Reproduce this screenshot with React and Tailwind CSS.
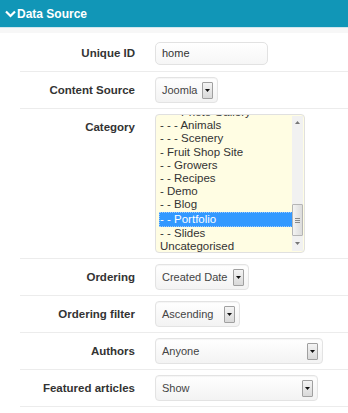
import React from "react";

const font = { fontFamily: '"Liberation Sans", Arial, sans-serif' };

function Arrow() {
  return (
    <span className="flex h-[17px] w-[11px] items-center justify-center rounded-[1px] border border-[#a0a0a0] bg-gradient-to-b from-[#f4f4f4] to-[#d9d9d9]">
      <svg width="5" height="3" viewBox="0 0 5 3">
        <path d="M0 0H5L2.5 3Z" fill="#111" />
      </svg>
    </span>
  );
}

function Select({ w, text }) {
  return (
    <div
      className={`flex h-[26px] items-center justify-between rounded-[4px] border border-[#e3e3e3] bg-gradient-to-b from-white to-[#f3f3f3] pl-[6px] pr-[4px] shadow-[inset_0_1px_1px_rgba(0,0,0,0.04)] ${w}`}
    >
      <span className="text-[11px] text-[#444]">{text}</span>
      <Arrow />
    </div>
  );
}

function Row({ label, children }) {
  return (
    <div className="flex items-start border-b border-[#ececec] py-[5px]">
      <div className="w-[115px] pr-0 text-right text-[11.5px] font-bold leading-[26px] text-[#333]">
        {label}
      </div>
      <div className="ml-[20px] flex min-h-[26px] items-center">{children}</div>
    </div>
  );
}

const items = [
  "- - - Animals",
  "- - - Scenery",
  "- Fruit Shop Site",
  "- - Growers",
  "- - Recipes",
  "- Demo",
  "- - Blog",
  "- - Portfolio",
  "- - Slides",
  "Uncategorised",
];

export default function App() {
  return (
    <div className="h-[413px] w-[348px] overflow-hidden bg-white" style={font}>
      <div className="flex h-[27px] items-center bg-[#1196b7] pl-[5px] text-[12px] font-bold text-white">
        <svg width="11" height="8" viewBox="0 0 11 8" className="mr-[1px] mt-[1px]">
          <path d="M1 1.5L5.5 6L10 1.5" stroke="#fff" strokeWidth="2.2" fill="none" />
        </svg>
        Data Source
      </div>
      <div className="h-[1px] bg-[#cfe6ee]" />
      <div className="h-[5px] bg-[#f7f7f7]" />
      <div className="ml-[20px] pt-[2px]">
        <Row label="Unique ID">
          <div className="flex h-[23px] w-[113px] items-center rounded-[5px] border border-[#e2e2e2] bg-gradient-to-b from-white to-[#f6f6f6] px-[6px] text-[11px] text-[#333]">
            home
          </div>
        </Row>
        <Row label="Content Source">
          <Select w="w-[63px]" text="Joomla" />
        </Row>
        <Row label="Category">
          <div className="relative h-[139px] w-[150px] overflow-hidden rounded-[4px] border border-[#e0e0e0] bg-[#fffde3]">
            <div className="absolute left-[3px] top-[-9px] w-[134px] text-[11.5px] leading-[13.2px] text-[#333]">
              <div className="px-[1px]">- - - Photo Gallery</div>
              {items.map((t) => (
                <div
                  key={t}
                  className={
                    t === "- - Portfolio"
                      ? "border border-dotted border-[#9cc9ff] bg-[#3399ff] px-0 text-white"
                      : "px-[1px]"
                  }
                >
                  {t}
                </div>
              ))}
            </div>
            <div className="absolute right-[1px] top-[1px] bottom-[1px] flex w-[11px] flex-col items-center bg-[#f1f1f1]">
              <div className="flex h-[13px] items-center justify-center">
                <svg width="5" height="3" viewBox="0 0 5 3">
                  <path d="M0 3H5L2.5 0Z" fill="#777" />
                </svg>
              </div>
              <div className="flex-1" />
              <div className="flex h-[32px] w-[11px] items-center justify-center rounded-[1px] border border-[#b5b5b5] bg-gradient-to-r from-[#f3f3f3] to-[#dcdcdc]">
                <svg width="5" height="5" viewBox="0 0 5 5">
                  <path d="M0 0.5H5M0 2.5H5M0 4.5H5" stroke="#8a8a8a" strokeWidth="1" />
                </svg>
              </div>
              <div className="flex h-[15px] items-center justify-center">
                <svg width="5" height="3" viewBox="0 0 5 3">
                  <path d="M0 0H5L2.5 3Z" fill="#777" />
                </svg>
              </div>
            </div>
          </div>
        </Row>
        <Row label="Ordering">
          <Select w="w-[94px]" text="Created Date" />
        </Row>
        <Row label="Ordering filter">
          <Select w="w-[85px]" text="Ascending" />
        </Row>
        <Row label="Authors">
          <Select w="w-[168px]" text="Anyone" />
        </Row>
        <Row label="Featured articles">
          <Select w="w-[163px]" text="Show" />
        </Row>
      </div>
    </div>
  );
}
